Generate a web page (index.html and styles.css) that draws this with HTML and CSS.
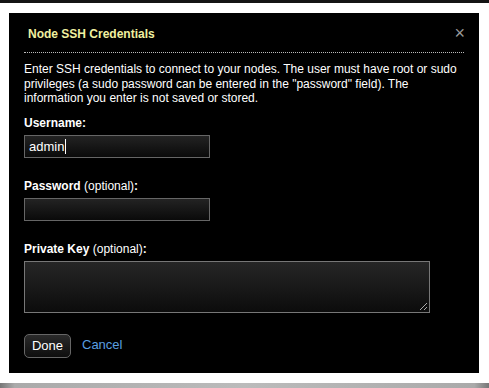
FILE: index.html
```html
<!DOCTYPE html>
<html lang="en">
<head>
    <meta charset="UTF-8">
    <title>Node SSH Credentials</title>
    <link rel="stylesheet" href="styles.css">
</head>
<body>
    <div class="top-strip"></div>
    <div class="dialog">
        <div class="dialog-header">
            <span class="dialog-title">Node SSH Credentials</span>
            <span class="close-button">&times;</span>
        </div>
        <p class="intro">
            Enter SSH credentials to connect to your nodes. The user must have root or sudo<br>
            privileges (a sudo password can be entered in the "password" field). The<br>
            information you enter is not saved or stored.
        </p>
        <form class="credentials-form">
            <div class="form-group">
                <label for="username">Username:</label>
                <div class="text-input">admin<span class="caret"></span></div>
            </div>
            <div class="form-group">
                <label for="password">Password <span class="optional">(optional)</span>:</label>
                <div class="text-input"></div>
            </div>
            <div class="form-group">
                <label for="privatekey">Private Key <span class="optional">(optional)</span>:</label>
                <div class="text-area">
                    <svg class="grip" width="9" height="9" viewBox="0 0 9 9">
                        <line x1="1" y1="8" x2="8" y2="1" stroke="#aaa" stroke-width="1"/>
                        <line x1="5" y1="8" x2="8" y2="5" stroke="#aaa" stroke-width="1"/>
                    </svg>
                </div>
            </div>
            <div class="actions">
                <button type="button" class="done-button">Done</button>
                <a href="#" class="cancel-link">Cancel</a>
            </div>
        </form>
    </div>
    <div class="bottom-bar"></div>
</body>
</html>
```

FILE: styles.css
```css
* {
    margin: 0;
    padding: 0;
    box-sizing: border-box;
}

body {
    background: #fff;
    font-family: "Liberation Sans", Arial, sans-serif;
    font-size: 12px;
    width: 489px;
    height: 388px;
    overflow: hidden;
    display: flex;
    flex-direction: column;
}

.top-strip {
    height: 3px;
    flex-shrink: 0;
    background: #141414;
}

.dialog {
    background: #000;
    color: #fff;
    margin: 10px 10px 0 9px;
    height: 360px;
    flex-shrink: 0;
    padding: 0 15px 0 15px;
}

.dialog-header {
    display: flex;
    justify-content: space-between;
    align-items: center;
    padding: 14px 0 11px 4px;
    border-bottom: 1px dotted #bbb;
}

.dialog-title {
    color: #f0f0a0;
    font-weight: bold;
    font-size: 12px;
    line-height: 14px;
}

.close-button {
    color: #999;
    font-size: 18px;
    line-height: 14px;
    margin-right: -1px;
    margin-top: -3px;
}

.intro {
    margin-top: 9px;
    line-height: 14.5px;
    white-space: nowrap;
}

.credentials-form {
    margin-top: 10px;
}

.form-group {
    margin-bottom: 21px;
}

label {
    display: block;
    font-weight: bold;
    line-height: 14px;
    margin-bottom: 5px;
}

.optional {
    font-weight: normal;
}

.text-input {
    width: 186px;
    height: 23px;
    border: 1px solid #666;
    background: linear-gradient(#232323, #0a0a0a);
    padding: 0 4px;
    font-size: 13px;
    line-height: 21px;
    display: flex;
    align-items: center;
}

.caret {
    display: inline-block;
    width: 1px;
    height: 15px;
    background: #fff;
    margin-left: 1px;
}

.text-area {
    width: 406px;
    height: 52px;
    border: 1px solid #777;
    background: linear-gradient(#262626, #0c0c0c);
    display: flex;
    align-items: flex-end;
    justify-content: flex-end;
    padding: 1px;
}

.actions {
    display: flex;
    align-items: center;
    gap: 11px;
    margin-top: 0;
}

.done-button {
    width: 47px;
    height: 24px;
    border: 1px solid #666;
    border-radius: 5px;
    background: linear-gradient(#2a2a2a, #0e0e0e);
    color: #fff;
    font-family: "Liberation Sans", Arial, sans-serif;
    font-size: 13px;
}

.cancel-link {
    color: #5a9fe0;
    text-decoration: none;
    font-size: 13px;
    margin-top: -2px;
}

.bottom-bar {
    margin-top: auto;
    height: 5px;
    flex-shrink: 0;
    background: linear-gradient(to right, #777, #aaa 3%, #bbb 50%, #aaa 97%, #777);
}
```
